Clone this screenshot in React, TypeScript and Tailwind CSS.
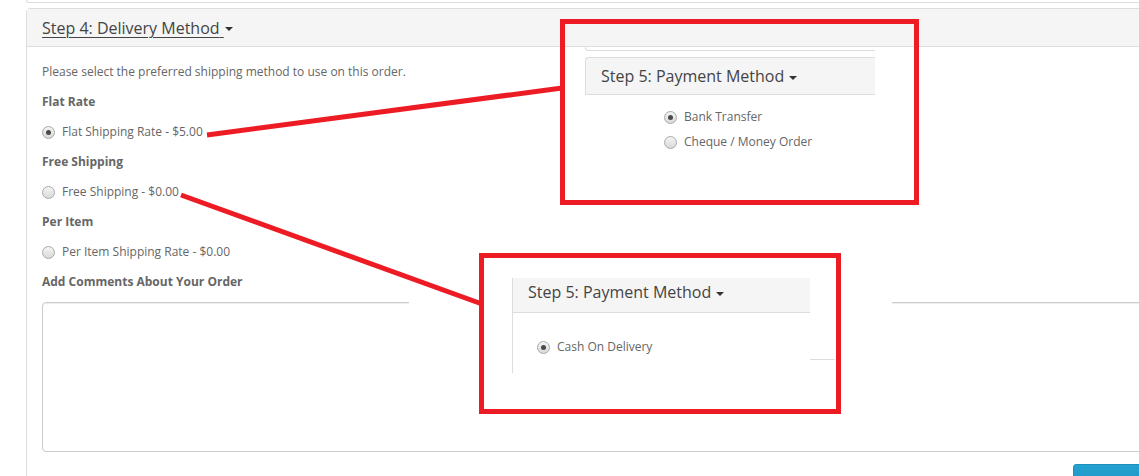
import React from 'react';

// Radio dot, drawn like the old Windows control in the screenshot
function Radio({ checked }: { checked?: boolean }) {
	return (
		<span className="inline-flex w-[13px] h-[13px] shrink-0 items-center justify-center rounded-full border border-[#a9a9a9] bg-gradient-to-b from-[#f4f4f4] to-[#d9d9d9]">
			{checked && <span className="block w-[5px] h-[5px] rounded-full bg-[#4a4a4a]" />}
		</span>
	);
}

function RadioRow({ label, checked }: { label: string; checked?: boolean }) {
	return (
		<label className="flex items-center h-[20px] gap-[7px]">
			<Radio checked={checked} />
			<span>{label}</span>
		</label>
	);
}

function Caret() {
	return <span className="inline-block w-0 h-0 ml-[1px] align-middle border-x-[4px] border-x-transparent border-t-[4px] border-t-[#333]" />;
}

function PanelTitle({ text, underline }: { text: string; underline?: boolean }) {
	return (
		<span className="text-[16px] leading-[20px] text-[#444]">
			<span className={underline ? 'underline underline-offset-[3px] decoration-[1px]' : ''}>{text}&nbsp;</span>
			<Caret />
		</span>
	);
}

export default function App() {
	return (
		<div
			className="relative w-[1139px] h-[476px] overflow-hidden bg-white text-[12px] leading-[20px] text-[#666]"
			style={{ fontFamily: '"Open Sans", "Noto Sans", Arial, sans-serif' }}
		>
			<div className="pl-[26px] w-[1179px]">
				{/* bottom edge of the previous panel */}
				<div className="h-[3px] border-l border-b border-[#ddd] rounded-bl-[4px]" />

				{/* Step 4 panel */}
				<div className="mt-[5px] border border-[#ddd] rounded-tl-[4px]">
					<div className="h-[38px] flex items-center px-[15px] bg-[#f5f5f5] border-b border-[#ddd]">
						<PanelTitle text="Step 4: Delivery Method" underline />
					</div>
					<div className="p-[15px]">
						<p className="mb-[10px]">Please select the preferred shipping method to use on this order.</p>
						<p className="mb-[10px] font-bold">Flat Rate</p>
						<div className="my-[10px]">
							<RadioRow label="Flat Shipping Rate - $5.00" checked />
						</div>
						<p className="mb-[10px] font-bold">Free Shipping</p>
						<div className="my-[10px]">
							<RadioRow label="Free Shipping - $0.00" />
						</div>
						<p className="mb-[10px] font-bold">Per Item</p>
						<div className="my-[10px]">
							<RadioRow label="Per Item Shipping Rate - $0.00" />
						</div>
						<p className="mb-[10px] font-bold">Add Comments About Your Order</p>
						<textarea className="block w-full h-[150px] resize-none border border-[#ccc] rounded-[4px] shadow-[inset_0_1px_1px_rgba(0,0,0,0.075)] outline-none" />
						<div className="flex justify-end mt-[12px]">
							{/* only the top edge of the Continue button is in view */}
							<button
								aria-label="Continue"
								className="w-[90px] h-[34px] rounded-[3px] border border-[#1f90bb] bg-gradient-to-b from-[#23a1d1] to-[#1f90bb]"
							/>
						</div>
					</div>
				</div>
			</div>

			{/* pasted screenshot patch over the comment box */}
			<div className="absolute left-[409px] top-[285px] w-[483px] h-[135px] bg-white" />

			{/* annotation arrows */}
			<svg className="absolute left-0 top-0 pointer-events-none" width="1139" height="476" viewBox="0 0 1139 476">
				<line x1="207" y1="135" x2="562" y2="88" stroke="#ed1c24" strokeWidth="5" />
				<line x1="181" y1="195" x2="482" y2="304" stroke="#ed1c24" strokeWidth="5" />
			</svg>

			{/* annotation 1: two payment methods */}
			<div className="absolute left-[560px] top-[19px] w-[359px] h-[186px] border-[5px] border-[#ed1c24] flex flex-col">
				<div className="mt-[23px] flex-1 bg-white pl-[20px]">
					<div className="w-[290px] h-[4px] border-l border-b border-[#ddd] rounded-bl-[3px]" />
					<div className="mt-[6px] w-[290px] h-[38px] flex items-center pl-[15px] bg-[#f5f5f5] border border-r-0 border-[#ddd] rounded-tl-[3px]">
						<PanelTitle text="Step 5: Payment Method" />
					</div>
					<div className="pl-[79px] pt-[12px] flex flex-col gap-[5px]">
						<RadioRow label="Bank Transfer" checked />
						<RadioRow label="Cheque / Money Order" />
					</div>
				</div>
			</div>

			{/* annotation 2: cash on delivery only */}
			<div className="absolute left-[479px] top-[253px] w-[362px] h-[161px] border-[5px] border-[#ed1c24] bg-white pl-[28px] pt-[20px]">
				<div className="flex">
					<div className="w-[298px] border-l border-[#ddd]">
						<div className="h-[35px] flex items-start pt-[4px] pl-[15px] bg-[#f5f5f5] border-b border-[#ddd]">
							<PanelTitle text="Step 5: Payment Method" />
						</div>
						<div className="h-[60px] pl-[24px] pt-[24px]">
							<RadioRow label="Cash On Delivery" checked />
						</div>
					</div>
					<div className="w-[25px] h-[82px] border-b border-[#ddd]" />
				</div>
			</div>
		</div>
	);
}
